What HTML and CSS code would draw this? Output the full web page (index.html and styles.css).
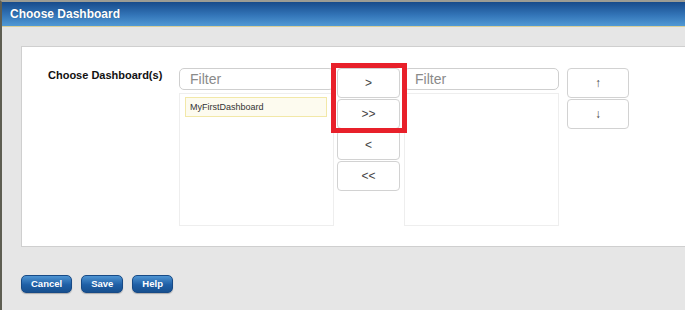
FILE: index.html
```html
<!DOCTYPE html>
<html lang="en">
<head>
    <meta charset="UTF-8">
    <title>Choose Dashboard</title>
    <link rel="stylesheet" href="styles.css">
</head>
<body>
    <div class="frame">
        <div class="titlebar">Choose Dashboard</div>

        <div class="content">
            <div class="panel">
                <div class="label">Choose Dashboard(s)</div>

                <div class="picker">
                    <input type="text" placeholder="Filter">
                    <div class="list">
                        <div class="item">MyFirstDashboard</div>
                    </div>
                </div>

                <div class="moves">
                    <button class="mv">&gt;</button>
                    <button class="mv">&gt;&gt;</button>
                    <button class="mv">&lt;</button>
                    <button class="mv">&lt;&lt;</button>
                    <div class="mark"></div>
                </div>

                <div class="picker">
                    <input type="text" placeholder="Filter">
                    <div class="list"></div>
                </div>

                <div class="order">
                    <button class="mv">&uarr;</button>
                    <button class="mv">&darr;</button>
                </div>
            </div>

            <div class="actions">
                <button class="act">Cancel</button>
                <button class="act">Save</button>
                <button class="act">Help</button>
            </div>
        </div>
    </div>
</body>
</html>
```

FILE: styles.css
```css
body {
    margin: 0;
    padding: 0;
    height: 310px;
    overflow: hidden;
    background-color: #e6e6e6;
    font-family: "Liberation Sans", Arial, sans-serif;
}

.frame {
    border-top: 2px solid #9c9c94;
    border-left: 2px solid #5e5e52;
    height: 308px;
    background-color: #e6e6e6;
}

.titlebar {
    height: 24px;
    line-height: 24px;
    padding-left: 8px;
    color: white;
    font-size: 12px;
    font-weight: bold;
    text-shadow: 0 0 1px rgba(0, 0, 0, 0.3);
    background: linear-gradient(#174b8b, #3375b8 55%, #5199d4);
    border-bottom: 1px solid #d8cf9a;
}

.content {
    padding-top: 19px;
    padding-left: 19px;
}

.panel {
    display: flex;
    box-sizing: border-box;
    height: 201px;
    padding-top: 21px;
    background: white;
    border: 1px solid #cfcfcf;
    border-right: none;
}

.label {
    flex-shrink: 0;
    width: 157px;
    padding-left: 26px;
    box-sizing: border-box;
    padding-top: 1px;
    white-space: nowrap;
    font-size: 11px;
    font-weight: bold;
    color: #111;
}

.picker {
    flex-shrink: 0;
    display: flex;
    flex-direction: column;
    width: 155px;
}

input {
    all: unset;
    box-sizing: border-box;
    height: 22px;
    padding-left: 10px;
    border: 1px solid #cfcfcf;
    border-radius: 5px;
    font-size: 14px;
    font-family: "Liberation Sans", Arial, sans-serif;
}

::placeholder {
    color: #8a8a8a;
}

.list {
    box-sizing: border-box;
    height: 133px;
    margin-top: 3px;
    padding: 3px 6px 3px 5px;
    border: 1px solid #eeeeee;
}

.item {
    height: 20px;
    line-height: 19px;
    box-sizing: border-box;
    padding-left: 4px;
    font-size: 9px;
    color: #333;
    background: #fdfbef;
    border: 1px solid #f2e8a8;
}

.moves {
    position: relative;
    flex-shrink: 0;
    display: flex;
    flex-direction: column;
    gap: 1px;
    width: 63px;
    margin-left: 3px;
    margin-right: 4px;
}

.order {
    flex-shrink: 0;
    display: flex;
    flex-direction: column;
    gap: 1px;
    width: 62px;
    margin-left: 8px;
}

.mv {
    all: unset;
    box-sizing: border-box;
    height: 30px;
    text-align: center;
    font-size: 12px;
    color: #444;
    background: white;
    border: 1px solid #d2d2d2;
    border-radius: 4px;
    font-family: "Liberation Sans", Arial, sans-serif;
}

.mark {
    position: absolute;
    left: -6px;
    top: -5px;
    width: 76px;
    height: 70px;
    box-sizing: border-box;
    border: 5px solid #e8202a;
}

.actions {
    display: flex;
    gap: 9px;
    padding-top: 28px;
}

.act {
    all: unset;
    box-sizing: border-box;
    height: 18px;
    padding: 0 9px;
    line-height: 16px;
    font-size: 9.5px;
    font-weight: bold;
    color: white;
    font-family: "Liberation Sans", Arial, sans-serif;
    background: linear-gradient(#4e94d2, #1f5fa6 55%, #17508f);
    border: 1px solid #174a86;
    border-radius: 5px;
    box-shadow: 0 1px 1px rgba(0, 0, 0, 0.25);
}
```
